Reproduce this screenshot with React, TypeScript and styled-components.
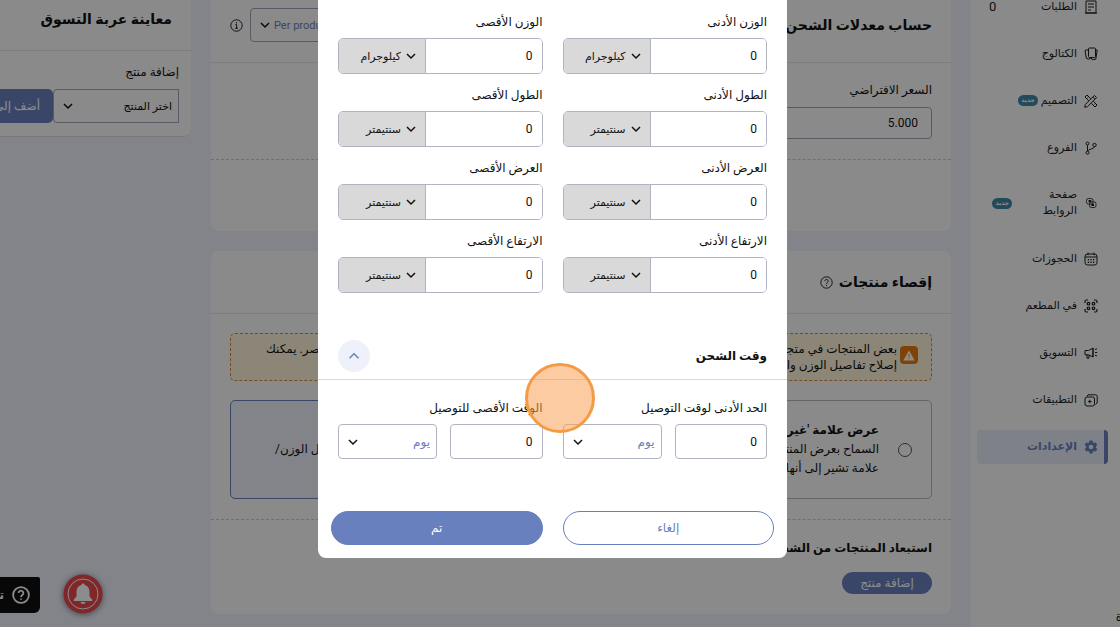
import React from "react";
import styled, { createGlobalStyle, css } from "styled-components";

const Global = createGlobalStyle`
  * { box-sizing: border-box; }
  html, body { margin: 0; height: 100%; overflow: hidden; }
  body, input, select, button {
    font-family: Roboto, "DejaVu Sans", sans-serif;
    font-size: 12px;
    color: #111;
  }
  h1, h2, h3, p, ul { margin: 0; padding: 0; }
`;

const blue = "#6880be";
const line = "#b0b3c2";

const Page = styled.div`
  position: relative;
  display: flex;
  height: 100vh;
  overflow: hidden;
  background: #eef1fb;
`;

/* ---------- side navigation ---------- */

const Sidebar = styled.nav`
  flex: 0 0 149px;
  background: #fcfcfc;
  padding: 0 12px 0 6px;
  overflow: hidden;
`;

const NavList = styled.ul`
  list-style: none;
  margin-top: -17px;
`;

const NavItem = styled.li<{ $tall?: boolean }>`
  display: flex;
  align-items: center;
  height: ${(p) => (p.$tall ? 64 : 47)}px;
`;

const NavLink = styled.a<{ $active?: boolean }>`
  display: flex;
  align-items: center;
  flex: 1;
  gap: 7px;
  min-height: 34px;
  padding: 0 10px 0 12px;
  border-radius: 4px;
  color: ${(p) => (p.$active ? blue : "#1c1c1c")};
  font-size: 11px;
  font-weight: ${(p) => (p.$active ? 700 : 400)};
  line-height: 16px;
  text-decoration: none;
  white-space: nowrap;
  ${(p) =>
    p.$active &&
    css`
      background: #e6ebf8;
      border-right: 4px solid ${blue};
      padding-right: 6px;
    `}
  svg { flex: none; }
`;

const NavText = styled.span<{ $wrap?: boolean }>`
  ${(p) => p.$wrap && "white-space: normal; width: 58px;"}
`;

const Count = styled.span`
  margin-right: auto;
  font-size: 13px;
`;

const Badge = styled.span<{ $end?: boolean }>`
  height: 11px;
  margin-right: -4px;
  padding: 0 3px;
  border-radius: 6px;
  background: #3f87a6;
  color: #fff;
  font-size: 6px;
  font-weight: 700;
  line-height: 10px;
  ${(p) => p.$end && "margin-right: auto; margin-left: 6px;"}
`;

/* ---------- main column ---------- */

const Main = styled.main`
  flex: 1;
  min-width: 0;
  padding: 0 20px;
`;

const Card = styled.section`
  background: #fcfcfc;
  border-radius: 0 0 8px 8px;
  & + & { margin-top: 20px; border-radius: 8px; }
`;

const CardHead = styled.header<{ $scrolled?: boolean }>`
  display: flex;
  align-items: center;
  gap: 6px;
  height: 63px;
  padding: ${(p) => (p.$scrolled ? "0 19px 12px" : "0 19px")};
  border-bottom: 1px solid #e4e4e8;
`;

const CardTitle = styled.h2`
  font-size: 14px;
  font-weight: 700;
  line-height: 24px;
  white-space: nowrap;
`;

const HeadControls = styled.div`
  display: flex;
  align-items: center;
  gap: 7px;
  margin-right: auto;
`;

const Section = styled.div`
  padding: 19px 19px 20px;
  border-bottom: 1px dashed #c9cad2;
`;

const LastSection = styled.div`
  height: 71px;
`;

const FieldLabel = styled.label`
  display: block;
  height: 25px;
  line-height: 16px;
`;

const PriceInput = styled.input`
  display: block;
  width: 50%;
  height: 32px;
  padding: 0 13px;
  border: 1px solid #a0a4b4;
  border-radius: 4px;
  background: transparent;
  font-size: 12px;
`;

const Alert = styled.div`
  display: flex;
  gap: 3px;
  height: 48px;
  padding: 7px 13px;
  border: 1px dashed #e0863a;
  border-radius: 5px;
  background: #fff5dc;
`;

const AlertIcon = styled.span`
  display: flex;
  align-items: center;
  justify-content: center;
  width: 18px;
  height: 18px;
  margin: 5px 0;
  border-radius: 4px;
  background: #e87a12;
`;

const AlertText = styled.div`
  flex: 1;
  padding: 0 0 0 22px;
  line-height: 16px;
`;

const AlertLine = styled.p`
  display: flex;
  justify-content: space-between;
`;

const Options = styled.div`
  display: grid;
  grid-template-columns: 1fr 1fr;
  gap: 20px;
  margin-top: 19px;
`;

const Option = styled.label<{ $selected?: boolean }>`
  display: flex;
  align-items: center;
  gap: 19px;
  height: 99px;
  padding: 0 19px;
  border: 1px solid ${(p) => (p.$selected ? blue : "#b8b8be")};
  border-radius: 5px;
  background: ${(p) => (p.$selected ? "#edf1fb" : "transparent")};
  overflow: hidden;
`;

const Radio = styled.input`
  appearance: none;
  flex: none;
  width: 14px;
  height: 14px;
  margin: 0;
  border: 1px solid #555;
  border-radius: 50%;
  &:checked { border: 4px solid ${blue}; }
`;

const OptionText = styled.span<{ $end?: boolean }>`
  flex: 1;
  line-height: 19px;
  white-space: nowrap;
  ${(p) => p.$end && "text-align: left; padding-left: 25px;"}
`;

const OptionLine = styled.span<{ $bold?: boolean }>`
  display: block;
  font-weight: ${(p) => (p.$bold ? 700 : 400)};
`;

const Exclude = styled.div`
  padding: 18px 19px 20px;
`;

const ExcludeTitle = styled.h3`
  height: 34px;
  font-size: 12px;
  font-weight: 700;
  line-height: 20px;
`;

const AddButton = styled.button`
  display: block;
  width: 90px;
  height: 22px;
  padding: 0;
  border: 0;
  border-radius: 11px;
  background: ${blue};
  color: #fff;
  line-height: 20px;
`;

/* ---------- cart preview ---------- */

const Preview = styled.aside`
  flex: 0 0 191px;
  overflow: hidden;
`;

const PreviewCard = styled.section`
  background: #fcfcfc;
  border-radius: 0 0 8px 0;
  border-bottom: 1px solid #dcdde4;
`;

const PreviewHead = styled.header`
  height: 51px;
  padding: 7px 19px 0;
  border-bottom: 1px solid #e4e4e8;
`;

const PreviewBody = styled.div`
  padding: 13px 12px 13px 0;
`;

const PreviewLabel = styled.label`
  display: block;
  height: 25px;
  line-height: 16px;
`;

const PreviewRow = styled.div`
  display: flex;
  overflow: hidden;
`;

const CartButton = styled.button`
  flex: none;
  width: 110px;
  height: 34px;
  padding: 0 13px;
  border: 0;
  border-radius: 5px;
  background: ${blue};
  color: #fff;
  text-align: right;
  white-space: nowrap;
`;

/* ---------- shared select ---------- */

type Kind = "unit" | "time" | "product" | "rate";

const kinds = {
  unit: css`
    flex: 0 0 87px;
    border-right: 1px solid ${line};
    background: #d9d9d9;
    select { padding: 0 24px 0 4px; font-size: 11px; }
    svg { right: 8px; }
  `,
  time: css`
    flex: 0 0 99px;
    height: 35px;
    border: 1px solid ${line};
    border-radius: 4px;
    select { padding: 0 6px; color: ${blue}; }
    svg { left: 8px; }
  `,
  product: css`
    flex: 0 0 126px;
    height: 34px;
    border: 1px solid #a0a4b8;
    border-radius: 4px 0 0 4px;
    select { padding: 0 6px; font-size: 11px; }
    svg { left: 8px; }
  `,
  rate: css`
    flex: 0 0 130px;
    height: 34px;
    border: 1px solid #a0a4b8;
    border-radius: 4px;
    direction: ltr;
    select { padding: 0 0 0 23px; font-size: 11px; color: ${blue}; }
    svg { left: 8px; }
  `,
};

const SelectBox = styled.span<{ $kind: Kind }>`
  position: relative;
  display: flex;
  align-items: center;
  select {
    appearance: none;
    width: 100%;
    height: 100%;
    border: 0;
    background: transparent;
  }
  svg { position: absolute; pointer-events: none; }
  ${(p) => kinds[p.$kind]}
`;

function Chevron({ up, color = "#111" }: { up?: boolean; color?: string }) {
  return (
    <svg width="12" height="12" viewBox="0 0 12 12" fill="none" stroke={color} strokeWidth="1.5">
      <path d={up ? "M1.5 8.3 6 3.8l4.500 4.500" : "M2 4l4 4 4-4"} />
    </svg>
  );
}

function Select({ kind, value, id, label }: { kind: Kind; value: string; id?: string; label?: string }) {
  return (
    <SelectBox $kind={kind}>
      <select id={id} aria-label={label}>
        <option>{value}</option>
      </select>
      <Chevron />
    </SelectBox>
  );
}

/* ---------- modal ---------- */

const Overlay = styled.div`
  position: absolute;
  inset: 0;
  display: flex;
  align-items: flex-start;
  justify-content: center;
  padding-right: 15px;
  background: rgba(0, 0, 0, 0.45);
`;

const Modal = styled.div`
  position: relative;
  width: 469px;
  border-radius: 0 0 8px 8px;
  background: #fff;
`;

const Fields = styled.div`
  display: grid;
  grid-template-columns: repeat(2, minmax(0, 1fr));
  gap: 13px 20px;
  padding: 14px 20px 0;
`;

const Label = styled.label`
  display: block;
  height: 24px;
  line-height: 16px;
`;

const Group = styled.div`
  display: flex;
  height: 36px;
  border: 1px solid ${line};
  border-radius: 5px;
  overflow: hidden;
`;

const GroupInput = styled.input`
  flex: 1;
  width: 0;
  min-width: 0;
  padding: 0 9px;
  border: 0;
`;

const TimeHead = styled.div`
  display: flex;
  align-items: center;
  justify-content: space-between;
  height: 47px;
  margin-top: 40px;
  padding: 0 20px;
  border-bottom: 1px solid #d8d9de;
`;

const TimeTitle = styled.h3`
  font-size: 12px;
  font-weight: 700;
`;

const Collapse = styled.button`
  display: flex;
  align-items: center;
  justify-content: center;
  width: 32px;
  height: 32px;
  padding: 0;
  border: 0;
  border-radius: 50%;
  background: #eef1f9;
`;

const TimeFields = styled(Fields)`
  padding-top: 20px;
`;

const TimeRow = styled.div`
  display: flex;
  gap: 13px;
`;

const TimeInput = styled.input`
  flex: 1;
  width: 0;
  min-width: 0;
  height: 35px;
  padding: 0 9px;
  border: 1px solid ${line};
  border-radius: 4px;
`;

const Actions = styled.div`
  display: grid;
  grid-template-columns: 1fr 1fr;
  gap: 20px;
  padding: 52px 13px 13px;
`;

const Action = styled.button<{ $primary?: boolean }>`
  height: 34px;
  border: 1px solid ${blue};
  border-radius: 17px;
  background: ${(p) => (p.$primary ? blue : "#fff")};
  color: ${(p) => (p.$primary ? "#fff" : blue)};
`;

const ClickMark = styled.span`
  position: absolute;
  top: 363px;
  left: 207px;
  width: 70px;
  height: 70px;
  border: 3px solid #f39c47;
  border-radius: 50%;
  background: rgba(250, 160, 84, 0.55);
`;

/* ---------- floating widgets ---------- */

const HelpTab = styled.button`
  position: absolute;
  left: 0;
  bottom: 14px;
  display: flex;
  align-items: center;
  gap: 8px;
  width: 40px;
  height: 36px;
  padding: 0 10px 0 0;
  border: 0;
  border-radius: 0 2px 6px 0;
  background: #101012;
  color: #fff;
  font-weight: 700;
  white-space: nowrap;
  overflow: hidden;
  svg { flex: none; }
`;

const Bell = styled.button`
  position: absolute;
  left: 63px;
  bottom: 13px;
  width: 40px;
  height: 40px;
  padding: 0;
  border: 0;
  border-radius: 50%;
  background: none;
  filter: drop-shadow(0 1px 3px rgba(0, 0, 0, 0.5));
  svg { display: block; }
`;

const Corner = styled.span`
  position: absolute;
  right: -2px;
  bottom: 3px;
`;

/* ---------- icons ---------- */

const icons: Record<string, React.ReactNode> = {
  orders: <path d="M2 1h10v12H2zM.8 13h12.400M4 4h6M4 7h6M4 10h3" />,
  catalogue: (
    <>
      <rect x="4.500" y="1" width="7" height="9.500" rx="1" />
      <path d="M4.500 3H2L1 3.600l1.400 7.800 2 .8L7 11M11.500 3h1.700l-1.400 9.200-3.600.6-1-2" />
    </>
  ),
  design: (
    <>
      <path d="M1.200 10.600 10.400 1.400l2.200 2.200-9.200 9.200-2.600.5zM8.800 3l2.200 2.200" />
      <path d="M4.600 6.600 1 3l2-2 3.600 3.600M9.400 7.400 13 11l-2 2-3.600-3.600M2.600 4.600l1-1M10.400 10.400l1-1" />
    </>
  ),
  branches: (
    <>
      <circle cx="3.500" cy="2.500" r="1.500" />
      <circle cx="3.500" cy="11.700" r="1.500" />
      <circle cx="10.500" cy="4" r="1.700" />
      <path d="M3.500 4v6.200M10.500 5.700C10 8.600 4.500 7.500 3.700 10" />
    </>
  ),
  links: (
    <>
      <rect x="2.500" y="2.500" width="6.500" height="5.500" rx="1.800" strokeWidth=".8" />
      <rect x="5.500" y="6" width="6.500" height="5.500" rx="1.800" strokeWidth=".8" />
      <path d="M4.600 5.200h2.600M7.400 8.800h2.600" strokeWidth="2.200" />
    </>
  ),
  bookings: (
    <>
      <rect x="1" y="2" width="12" height="11" rx="2.500" />
      <path d="M1 5h12M4 .6v2.600M10 .6v2.600" />
      <path d="M3.800 7.600h1.300M6.400 7.600h1.300M9 7.600h1.300M3.800 10.300h1.300M6.400 10.300h1.300M9 10.300h1.300" strokeWidth="1.400" />
    </>
  ),
  restaurant: (
    <g strokeWidth="1.200">
      <path d="M1 4V2.500Q1 1 2.500 1H4M10 1h1.500Q13 1 13 2.500V4M13 10v1.500q0 1.500-1.500 1.500H10M4 13H2.500Q1 13 1 11.500V10" />
      <circle cx="4.500" cy="4.700" r="1.300" />
      <circle cx="9.500" cy="4.700" r="1.300" />
      <circle cx="4.500" cy="9.300" r="1.300" />
      <circle cx="9.500" cy="9.300" r="1.300" />
    </g>
  ),
  marketing: (
    <>
      <path d="M1 4.500h3.500L9 2v9L4.500 8.800H1zM3 8.800v3.400h2V9M9 2v9" />
      <path d="M11 3.500l2-.8M11 6.500h2.200M11 9.200l2 .8" />
    </>
  ),
  apps: (
    <>
      <rect x="1" y="4" width="9.500" height="9" rx="2" />
      <path d="M3 3.500 4 1.800h7.500q1.700 0 1.700 1.700V10l-1.700 1.500M5.800 6.800v3.400M4.100 8.500h3.400" />
    </>
  ),
};

function NavIcon({ name }: { name: string }) {
  if (name === "settings") {
    return (
      <svg width="14" height="14" viewBox="0 0 24 24" fill={blue}>
        <path
          fillRule="evenodd"
          d="M9.500 1h5l.8 3.200 1.800 1 3.200-1 2.500 4.300-2.400 2.300v2.400l2.400 2.300-2.500 4.300-3.200-1-1.800 1-.8 3.200h-5l-.8-3.200-1.800-1-3.200 1-2.500-4.300 2.400-2.300v-2.400L1.200 8.500l2.500-4.300 3.200 1 1.800-1zM12 8a4 4 0 1 0 0 8 4 4 0 0 0 0-8z"
        />
      </svg>
    );
  }
  return (
    <svg width="14" height="14" viewBox="0 0 14 14" fill="none" stroke="#1c1c1c" strokeWidth="1">
      {icons[name]}
    </svg>
  );
}

function HelpIcon({ size, color, width }: { size: number; color: string; width: number }) {
  return (
    <svg width={size} height={size} viewBox="0 0 16 16" fill="none" stroke={color} strokeWidth={width}>
      <circle cx="8" cy="8" r="7" />
      <path d="M5.900 6.300a2.100 2.100 0 1 1 3.300 1.700C8.400 8.500 8 8.800 8 9.700M8 11v1.300" />
    </svg>
  );
}

function InfoIcon() {
  return (
    <svg width="13" height="13" viewBox="0 0 13 13" fill="none" stroke="#222">
      <circle cx="6.500" cy="6.500" r="5.700" />
      <path d="M5.400 5.500h1.200v3.600M5.200 9.300h2.800M6.500 3.200v1.300" />
    </svg>
  );
}

type NavEntry = { icon: string; text: string; isNew?: boolean; tall?: boolean; active?: boolean; count?: number };

const nav: NavEntry[] = [
  { icon: "orders", text: "الطلبات", count: 0 },
  { icon: "catalogue", text: "الكتالوج" },
  { icon: "design", text: "التصميم", isNew: true },
  { icon: "branches", text: "الفروع" },
  { icon: "links", text: "صفحة الروابط", isNew: true, tall: true },
  { icon: "bookings", text: "الحجوزات" },
  { icon: "restaurant", text: "في المطعم" },
  { icon: "marketing", text: "التسويق" },
  { icon: "apps", text: "التطبيقات" },
  { icon: "settings", text: "الإعدادات", active: true },
];

const limits = [
  { id: "weight-min", label: "الوزن الأدنى", unit: "كيلوجرام" },
  { id: "weight-max", label: "الوزن الأقصى", unit: "كيلوجرام" },
  { id: "length-min", label: "الطول الأدنى", unit: "سنتيمتر" },
  { id: "length-max", label: "الطول الأقصى", unit: "سنتيمتر" },
  { id: "width-min", label: "العرض الأدنى", unit: "سنتيمتر" },
  { id: "width-max", label: "العرض الأقصى", unit: "سنتيمتر" },
  { id: "height-min", label: "الارتفاع الأدنى", unit: "سنتيمتر" },
  { id: "height-max", label: "الارتفاع الأقصى", unit: "سنتيمتر" },
];

const times = [
  { id: "time-min", label: "الحد الأدنى لوقت التوصيل" },
  { id: "time-max", label: "الوقت الأقصى للتوصيل" },
];

export default function App() {
  return (
    <Page dir="rtl" lang="ar">
      <Global />
      <Sidebar>
        <NavList>
          {nav.map((n) => (
            <NavItem key={n.icon} $tall={n.tall}>
              <NavLink href="#" $active={n.active}>
                <NavIcon name={n.icon} />
                <NavText $wrap={n.tall}>{n.text}</NavText>
                {n.isNew && <Badge $end={n.tall}>جديد</Badge>}
                {n.count !== undefined && <Count>{n.count}</Count>}
              </NavLink>
            </NavItem>
          ))}
        </NavList>
      </Sidebar>

      <Main>
        <Card>
          <CardHead $scrolled>
            <CardTitle>حساب معدلات الشحن</CardTitle>
            <HeadControls>
              <Select kind="rate" value="Per product" label="طريقة الحساب" />
              <InfoIcon />
            </HeadControls>
          </CardHead>
          <Section>
            <FieldLabel htmlFor="price">السعر الافتراضي</FieldLabel>
            <PriceInput id="price" defaultValue="5.000" />
          </Section>
          <LastSection />
        </Card>

        <Card>
          <CardHead>
            <CardTitle>إقصاء منتجات</CardTitle>
            <HelpIcon size={13} color="#222" width={1.2} />
          </CardHead>
          <Section>
            <Alert>
              <AlertIcon>
                <svg width="12" height="11" viewBox="0 0 12 11">
                  <path d="M6 .5 11.700 10.500H.3z" fill="#fff" />
                  <path d="M6 4v3.200M6 8.200v1" stroke="#e87a12" />
                </svg>
              </AlertIcon>
              <AlertText>
                <AlertLine>
                  <span>بعض المنتجات في متجرك</span>
                  <span>تفتقد بعض العناصر. يمكنك</span>
                </AlertLine>
                <AlertLine>
                  <span>إصلاح تفاصيل الوزن والأبعاد</span>
                </AlertLine>
              </AlertText>
            </Alert>
            <Options>
              <Option>
                <Radio type="radio" name="mode" />
                <OptionText>
                  <OptionLine $bold>عرض علامة 'غير متاح للشحن'</OptionLine>
                  <OptionLine>السماح بعرض المنتجات مع</OptionLine>
                  <OptionLine>علامة تشير إلى أنها لا تشحن</OptionLine>
                </OptionText>
              </Option>
              <Option $selected>
                <Radio type="radio" name="mode" defaultChecked />
                <OptionText $end>
                  <OptionLine>المنتجات بدون تفاصيل الوزن/</OptionLine>
                </OptionText>
              </Option>
            </Options>
          </Section>
          <Exclude>
            <ExcludeTitle>استبعاد المنتجات من الشحن</ExcludeTitle>
            <AddButton>إضافة منتج</AddButton>
          </Exclude>
        </Card>
      </Main>

      <Preview>
        <PreviewCard>
          <PreviewHead>
            <CardTitle>معاينة عربة التسوق</CardTitle>
          </PreviewHead>
          <PreviewBody>
            <PreviewLabel htmlFor="product">إضافة منتج</PreviewLabel>
            <PreviewRow>
              <Select kind="product" value="اختر المنتج" id="product" />
              <CartButton>أضف إلى السلة</CartButton>
            </PreviewRow>
          </PreviewBody>
        </PreviewCard>
      </Preview>

      <HelpTab>
        <HelpIcon size={18} color="#fff" width={1.6} />
        <span>تحتاج مساعدة؟</span>
      </HelpTab>
      <Bell aria-label="الإشعارات">
        <svg width="40" height="40" viewBox="0 0 40 40">
          <circle cx="20" cy="20" r="19.500" fill="#e8474c" />
          <circle cx="20" cy="20" r="15" fill="none" stroke="#fff" />
          <path d="M20 9.500c1 0 1.600.6 1.700 1.500 3.300.8 4.800 3.500 4.800 7v4.500l2.700 3V27H10.800v-1.500l2.700-3V18c0-3.500 1.500-6.200 4.800-7 .1-.9.700-1.500 1.700-1.500zM17.500 28h5a2.500 2 0 0 1-5 0z" fill="#fff" />
        </svg>
      </Bell>
      <Corner>ة</Corner>

      <Overlay>
        <Modal role="dialog" aria-label="وقت الشحن">
          <Fields>
            {limits.map((f) => (
              <div key={f.id}>
                <Label htmlFor={f.id}>{f.label}</Label>
                <Group>
                  <GroupInput id={f.id} defaultValue="0" />
                  <Select kind="unit" value={f.unit} label={f.label} />
                </Group>
              </div>
            ))}
          </Fields>
          <TimeHead>
            <TimeTitle>وقت الشحن</TimeTitle>
            <Collapse aria-label="طي">
              <Chevron up color={blue} />
            </Collapse>
          </TimeHead>
          <TimeFields>
            {times.map((t) => (
              <div key={t.id}>
                <Label htmlFor={t.id}>{t.label}</Label>
                <TimeRow>
                  <TimeInput id={t.id} defaultValue="0" />
                  <Select kind="time" value="يوم" label={t.label} />
                </TimeRow>
              </div>
            ))}
          </TimeFields>
          <Actions>
            <Action>إلغاء</Action>
            <Action $primary>تم</Action>
          </Actions>
          <ClickMark />
        </Modal>
      </Overlay>
    </Page>
  );
}
